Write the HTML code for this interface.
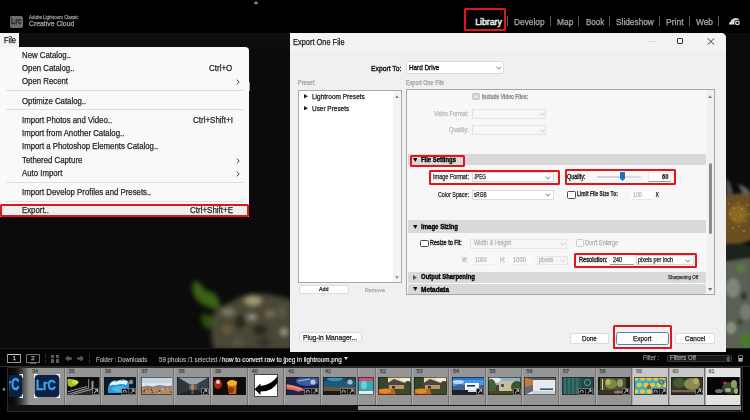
<!DOCTYPE html>
<html><head><meta charset="utf-8"><style>
html,body{margin:0;padding:0;width:750px;height:420px;overflow:hidden;background:#000;}
body>div,body>svg{position:absolute;}
.t{white-space:nowrap;line-height:1;font-family:"Liberation Sans",sans-serif;transform-origin:0 0;-webkit-text-stroke:0.25px currentColor;}
</style></head><body>
<div style="left:0.00px;top:0.00px;width:750.00px;height:33.00px;background:#000;"></div>
<div style="left:0.00px;top:33.00px;width:750.00px;height:319.00px;background:#0b0b0b;"></div>
<svg style="left:160px;top:255px;" width="130" height="95" viewBox="160 255 130 95"><defs><filter id="bl" x="-50%" y="-50%" width="200%" height="200%"><feGaussianBlur stdDeviation="2.4"/></filter><filter id="bl2" x="-50%" y="-50%" width="200%" height="200%"><feGaussianBlur stdDeviation="2.8"/></filter></defs>
<g filter="url(#bl)">
<path d="M194 281 Q199 280 203 288 Q208 292 214 293 Q221 300 220 308 Q214 311 206 306 Q198 302 194 296 Q191 288 194 281Z" fill="#3a6212"/>
<path d="M201 315 Q210 313 214 318 Q214 328 207 329 Q200 323 201 315Z" fill="#2c5010"/>
<path d="M214 312 Q222 306 240 297 Q252 293 266 294 Q282 297 292 300 L292 350 L214 350 Q208 330 214 312Z" fill="#484636"/>
</g>
<g filter="url(#bl2)">
<ellipse cx="253" cy="301" rx="9" ry="5" fill="#a29a72"/>
<ellipse cx="228" cy="312" rx="7" ry="4" fill="#807a62"/>
<ellipse cx="252" cy="317" rx="5" ry="3" fill="#a0a098"/>
<ellipse cx="270" cy="314" rx="5" ry="4" fill="#7a7056"/>
<ellipse cx="240" cy="322" rx="5" ry="6" fill="#22221a"/>
<ellipse cx="260" cy="330" rx="7" ry="5" fill="#26241c"/>
<ellipse cx="284" cy="332" rx="4" ry="4" fill="#9a9a90"/>
<ellipse cx="227" cy="330" rx="5" ry="5" fill="#6a5a40"/>
<ellipse cx="264" cy="342" rx="7" ry="5" fill="#34322a"/>
<ellipse cx="238" cy="342" rx="6" ry="4" fill="#585444"/>
<ellipse cx="282" cy="312" rx="5" ry="6" fill="#5a584a"/>
</g></svg>
<svg style="left:726px;top:150px;" width="24" height="202" viewBox="726 150 24 202"><defs><filter id="bm" x="-50%" y="-50%" width="200%" height="200%"><feGaussianBlur stdDeviation="1.6"/></filter><filter id="bm2" x="-50%" y="-50%" width="200%" height="200%"><feGaussianBlur stdDeviation="0.6"/></filter></defs>
<g filter="url(#bm)">
<path d="M726 178 Q731 182 733 194 L728 197 L726 197Z" fill="#505048"/>
<path d="M738 184 Q746 186 752 194 L744 197Z" fill="#60605a"/>
<path d="M724 198 Q736 190 752 196 L752 240 Q740 244 724 246Z" fill="#6a5020"/>
<ellipse cx="738" cy="214" rx="9" ry="9" fill="#8a6a24"/>
<path d="M724 244 Q738 242 752 246 L752 260 L724 262Z" fill="#1e221c"/>
<path d="M724 262 L752 258 L752 352 L724 352Z" fill="#5a6054"/>
<ellipse cx="741" cy="268" rx="5" ry="4" fill="#5a7a40"/>
<ellipse cx="733" cy="288" rx="7" ry="10" fill="#7e8478"/>
<ellipse cx="746" cy="312" rx="6" ry="8" fill="#767c70"/>
<ellipse cx="746" cy="340" rx="6" ry="7" fill="#4a7a2a"/><ellipse cx="731" cy="328" rx="5" ry="6" fill="#8a9080"/><ellipse cx="740" cy="322" rx="3" ry="3" fill="#3a4034"/>
<ellipse cx="744" cy="296" rx="3" ry="4" fill="#2e322a"/>
</g>
<g filter="url(#bm2)" fill="#b08a30">
<circle cx="729" cy="204" r="0.8"/><circle cx="733" cy="208" r="0.9"/><circle cx="738" cy="203" r="0.8"/><circle cx="742" cy="209" r="0.9"/><circle cx="747" cy="205" r="0.8"/>
<circle cx="730" cy="214" r="0.9"/><circle cx="735" cy="219" r="0.8"/><circle cx="741" cy="216" r="0.9"/><circle cx="746" cy="221" r="0.8"/><circle cx="728" cy="224" r="0.8"/>
<circle cx="733" cy="228" r="0.9"/><circle cx="739" cy="226" r="0.8"/><circle cx="744" cy="231" r="0.9"/><circle cx="749" cy="214" r="0.8"/>
</g></svg>
<div style="left:10.00px;top:15.50px;width:13.00px;height:12.00px;background:#6d6d6d;border-radius:2px;"></div>
<div class="t" style="left:11.20px;top:17.88px;font-size:8.14px;font-weight:bold;color:#262626;transform:scaleX(0.837);">Lrc</div>
<div class="t" style="left:29.00px;top:14.55px;font-size:5.23px;color:#9a9a9a;transform:scaleX(0.853);">Adobe Lightroom Classic</div>
<div class="t" style="left:29.00px;top:19.70px;font-size:7.41px;color:#a8a8a8;transform:scaleX(0.924);">Creative Cloud</div>
<div style="left:464.40px;top:8.00px;width:41.80px;height:23.00px;border:2px solid #e3151c;border-radius:1.5px;box-sizing:border-box;"></div>
<div class="t" style="left:475.20px;top:18.09px;font-size:8.72px;color:#f2f2f2;-webkit-text-stroke:0.45px #f2f2f2;">Library</div>
<div class="t" style="left:514.00px;top:18.09px;font-size:8.72px;color:#a9a9a9;transform:scaleX(0.956);">Develop</div>
<div class="t" style="left:556.60px;top:18.09px;font-size:8.72px;color:#a9a9a9;transform:scaleX(0.967);">Map</div>
<div class="t" style="left:585.70px;top:18.09px;font-size:8.72px;color:#a9a9a9;transform:scaleX(0.911);">Book</div>
<div class="t" style="left:615.80px;top:18.09px;font-size:8.72px;color:#a9a9a9;transform:scaleX(0.953);">Slideshow</div>
<div class="t" style="left:665.70px;top:18.09px;font-size:8.72px;color:#a9a9a9;transform:scaleX(0.976);">Print</div>
<div class="t" style="left:695.60px;top:18.09px;font-size:8.72px;color:#a9a9a9;transform:scaleX(0.957);">Web</div>
<div style="left:507.10px;top:15.90px;width:1.00px;height:10.00px;background:#5a5a5a;"></div>
<div style="left:549.50px;top:15.90px;width:1.00px;height:10.00px;background:#5a5a5a;"></div>
<div style="left:578.10px;top:15.90px;width:1.00px;height:10.00px;background:#5a5a5a;"></div>
<div style="left:608.50px;top:15.90px;width:1.00px;height:10.00px;background:#5a5a5a;"></div>
<div style="left:658.90px;top:15.90px;width:1.00px;height:10.00px;background:#5a5a5a;"></div>
<div style="left:689.00px;top:15.90px;width:1.00px;height:10.00px;background:#5a5a5a;"></div>
<div style="left:718.30px;top:15.90px;width:1.00px;height:10.00px;background:#5a5a5a;"></div>
<svg style="left:726px;top:15px;" width="16" height="13" viewBox="726 15 16 13"><path d="M729 24.6 Q728.6 22.4 730.6 21.6 Q731.6 18.6 735.4 18 Q738.6 17.8 739.6 20.2 L737.5 24.6 Z" fill="#d6d6d6"/><circle cx="737.4" cy="22.9" r="3.1" fill="#000"/><circle cx="737.4" cy="22.9" r="1.8" fill="none" stroke="#d6d6d6" stroke-width="1.3"/></svg>
<svg style="left:252.5px;top:0.8px;" width="6" height="3.6" viewBox="0 0 6 3.6"><path d="M0 3.6 L3 0 L6 3.6Z" fill="#8a8a8a"/></svg>
<div style="left:19.00px;top:33.00px;width:271.00px;height:13.50px;background:#0e0e0e;"></div>
<div style="left:0.00px;top:33.00px;width:19.00px;height:13.50px;background:#f2f2f2;"></div>
<div class="t" style="left:3.80px;top:36.01px;font-size:8.58px;color:#111;transform:scaleX(0.868);">File</div>
<div style="left:0.00px;top:46.50px;width:249.00px;height:170.50px;background:#f9f9f9;border-radius:0 4px 0 0;"></div>
<div style="left:0.50px;top:204.50px;width:248.00px;height:12.00px;background:#eeeeee;"></div>
<div class="t" style="left:22.40px;top:50.71px;font-size:8.58px;color:#262626;transform:scaleX(0.910);">New Catalog..</div>
<div class="t" style="left:22.40px;top:63.71px;font-size:8.58px;color:#262626;transform:scaleX(0.910);">Open Catalog..</div>
<div class="t" style="left:209.34px;top:63.71px;font-size:8.58px;color:#262626;transform:scaleX(0.930);">Ctrl+O</div>
<div class="t" style="left:22.40px;top:77.01px;font-size:8.58px;color:#262626;transform:scaleX(0.910);">Open Recent</div>
<svg style="left:235.5px;top:78.80px;" width="4" height="6" viewBox="0 0 4 6"><path d="M0.7 0.6 L3.2 3 L0.7 5.4" fill="none" stroke="#333" stroke-width="0.9"/></svg>
<div class="t" style="left:22.40px;top:96.71px;font-size:8.58px;color:#262626;transform:scaleX(0.910);">Optimize Catalog..</div>
<div class="t" style="left:22.40px;top:115.71px;font-size:8.58px;color:#262626;transform:scaleX(0.910);">Import Photos and Video..</div>
<div class="t" style="left:192.71px;top:115.71px;font-size:8.58px;color:#262626;transform:scaleX(0.930);">Ctrl+Shift+I</div>
<div class="t" style="left:22.40px;top:129.01px;font-size:8.58px;color:#262626;transform:scaleX(0.910);">Import from Another Catalog..</div>
<div class="t" style="left:22.40px;top:142.41px;font-size:8.58px;color:#262626;transform:scaleX(0.910);">Import a Photoshop Elements Catalog..</div>
<div class="t" style="left:22.40px;top:155.71px;font-size:8.58px;color:#262626;transform:scaleX(0.910);">Tethered Capture</div>
<svg style="left:235.5px;top:157.50px;" width="4" height="6" viewBox="0 0 4 6"><path d="M0.7 0.6 L3.2 3 L0.7 5.4" fill="none" stroke="#333" stroke-width="0.9"/></svg>
<div class="t" style="left:22.40px;top:169.01px;font-size:8.58px;color:#262626;transform:scaleX(0.910);">Auto Import</div>
<svg style="left:235.5px;top:170.80px;" width="4" height="6" viewBox="0 0 4 6"><path d="M0.7 0.6 L3.2 3 L0.7 5.4" fill="none" stroke="#333" stroke-width="0.9"/></svg>
<div class="t" style="left:22.40px;top:188.01px;font-size:8.58px;color:#262626;transform:scaleX(0.910);">Import Develop Profiles and Presets..</div>
<div class="t" style="left:22.40px;top:206.41px;font-size:8.58px;color:#262626;transform:scaleX(0.910);">Export..</div>
<div class="t" style="left:189.60px;top:206.41px;font-size:8.58px;color:#262626;transform:scaleX(0.930);">Ctrl+Shift+E</div>
<div style="left:6.00px;top:90.00px;width:238.00px;height:1.00px;background:#dedede;"></div>
<div style="left:6.00px;top:108.70px;width:238.00px;height:1.00px;background:#dedede;"></div>
<div style="left:6.00px;top:181.50px;width:238.00px;height:1.00px;background:#dedede;"></div>
<div style="left:6.00px;top:200.80px;width:238.00px;height:1.00px;background:#dedede;"></div>
<div style="left:0.00px;top:204.00px;width:249.00px;height:13.20px;border:2px solid #e3151c;border-radius:1.5px;box-sizing:border-box;"></div>
<div style="left:249.00px;top:81.80px;width:1.30px;height:8.90px;background:#9a9a9a;"></div>
<div style="left:290.00px;top:33.00px;width:436.00px;height:319.00px;background:#f0f0f0;border-radius:0 5px 0 0;"></div>
<div style="left:290.00px;top:33.00px;width:436.00px;height:17.70px;background:#f3f3f3;border-radius:0 5px 0 0;"></div>
<div class="t" style="left:293.00px;top:37.66px;font-size:8.87px;color:#1a1a1a;transform:scaleX(0.838);">Export One File</div>
<div style="left:647.50px;top:41.00px;width:7.00px;height:0.60px;background:#d4d4d4;"></div>
<div style="left:676.80px;top:38.40px;width:6.00px;height:6.00px;border:1px solid #333;border-radius:1px;box-sizing:border-box;"></div>
<svg style="left:706.5px;top:38px;" width="8" height="7" viewBox="0 0 8 7"><path d="M0.6 0.4 L7.2 6.6 M7.2 0.4 L0.6 6.6" stroke="#333" stroke-width="0.9"/></svg>
<div class="t" style="left:370.90px;top:64.62px;font-size:7.27px;color:#1a1a1a;transform:scaleX(0.933);-webkit-text-stroke:0.4px #1a1a1a;">Export To:</div>
<div style="left:406.00px;top:61.40px;width:98.00px;height:12.80px;background:#fff;border:1px solid #dcdcdc;border-radius:2px;box-sizing:border-box;"></div>
<div class="t" style="left:408.70px;top:64.75px;font-size:7.12px;color:#1a1a1a;transform:scaleX(0.893);-webkit-text-stroke:0.4px #1a1a1a;">Hard Drive</div>
<svg style="left:496.00px;top:66.00px;" width="5.5" height="4" viewBox="0 0 5.5 4"><path d="M0.5 0.7 L2.75 3.1 L5.00 0.7" fill="none" stroke="#555" stroke-width="0.8"/></svg>
<div class="t" style="left:298.00px;top:80.04px;font-size:6.54px;color:#a0a0a0;transform:scaleX(0.845);">Preset:</div>
<div class="t" style="left:406.00px;top:80.04px;font-size:6.54px;color:#a0a0a0;transform:scaleX(0.836);">Export One File</div>
<div style="left:298.00px;top:89.60px;width:103.50px;height:193.60px;background:#fff;border:1px solid #a8a8a8;box-sizing:border-box;"></div>
<div style="left:393.00px;top:90.60px;width:7.50px;height:191.60px;background:#f3f3f3;"></div>
<svg style="left:394.5px;top:94.5px;" width="4" height="3.5" viewBox="0 0 4 3.5"><path d="M0 3.5 L2 0.3 L4 3.5Z" fill="#777"/></svg>
<svg style="left:394.5px;top:275.5px;" width="4" height="3.5" viewBox="0 0 4 3.5"><path d="M0 0 L2 3.2 L4 0Z" fill="#999"/></svg>
<svg style="left:304.2px;top:94.30px;" width="4" height="4.6" viewBox="0 0 4 4.6"><path d="M0 0 L4 2.3 L0 4.6Z" fill="#222"/></svg>
<div class="t" style="left:312.00px;top:93.27px;font-size:6.98px;color:#1a1a1a;transform:scaleX(0.934);">Lightroom Presets</div>
<svg style="left:304.2px;top:105.80px;" width="4" height="4.6" viewBox="0 0 4 4.6"><path d="M0 0 L4 2.3 L0 4.6Z" fill="#222"/></svg>
<div class="t" style="left:312.00px;top:104.77px;font-size:6.98px;color:#1a1a1a;transform:scaleX(0.923);">User Presets</div>
<div style="left:298.80px;top:285.30px;width:50.10px;height:9.10px;background:#fdfdfd;border:1px solid #dddddd;border-radius:2px;box-sizing:border-box;"></div>
<div class="t" style="left:318.80px;top:286.49px;font-size:6.25px;color:#111;transform:scaleX(0.863);">Add</div>
<div class="t" style="left:365.00px;top:286.61px;font-size:6.10px;color:#a8a8a8;transform:scaleX(0.880);">Remove</div>
<div style="left:406.00px;top:89.20px;width:309.30px;height:206.30px;background:#f7f7f7;border:1px solid #a8a8a8;box-sizing:border-box;"></div>
<div style="left:707.00px;top:90.20px;width:7.30px;height:204.30px;background:#f0f0f0;"></div>
<div style="left:708.50px;top:163.00px;width:3.10px;height:70.50px;background:#8c8c8c;border-radius:1.5px;"></div>
<svg style="left:708.2px;top:94.5px;" width="4.2" height="3.5" viewBox="0 0 4.2 3.5"><path d="M0 3.5 L2.1 0.3 L4.2 3.5Z" fill="#777"/></svg>
<svg style="left:708.2px;top:287.8px;" width="4.2" height="3.5" viewBox="0 0 4.2 3.5"><path d="M0 0 L2.1 3.2 L4.2 0Z" fill="#777"/></svg>
<div style="left:472.00px;top:92.50px;width:8.00px;height:7.90px;background:#d2d2d2;border:1px solid #c4c4c4;border-radius:1.5px;box-sizing:border-box;"></div>
<svg style="left:473.30px;top:94.30px;" width="6" height="5" viewBox="0 0 6 5"><path d="M0.6 2.4 L2.3 4 L5.4 0.8" fill="none" stroke="#fff" stroke-width="0.9"/></svg>
<div class="t" style="left:481.70px;top:93.74px;font-size:6.54px;font-weight:bold;color:#8a8a8a;transform:scaleX(0.755);">Include Video Files:</div>
<div class="t" style="left:434.00px;top:110.56px;font-size:6.40px;color:#b9b9b9;transform:scaleX(0.867);">Video Format:</div>
<div style="left:471.50px;top:109.00px;width:74.50px;height:9.70px;background:#f6f6f6;border:1px solid #e4e4e4;box-sizing:border-box;"></div>
<svg style="left:539.50px;top:112.30px;" width="5.5" height="4" viewBox="0 0 5.5 4"><path d="M0.5 0.7 L2.75 3.1 L5.00 0.7" fill="none" stroke="#c4c4c4" stroke-width="0.8"/></svg>
<div class="t" style="left:449.00px;top:126.56px;font-size:6.40px;color:#b9b9b9;transform:scaleX(0.909);">Quality:</div>
<div style="left:471.50px;top:125.00px;width:74.50px;height:10.00px;background:#f6f6f6;border:1px solid #e4e4e4;box-sizing:border-box;"></div>
<svg style="left:539.50px;top:128.50px;" width="5.5" height="4" viewBox="0 0 5.5 4"><path d="M0.5 0.7 L2.75 3.1 L5.00 0.7" fill="none" stroke="#c4c4c4" stroke-width="0.8"/></svg>
<div style="left:408.00px;top:154.20px;width:297.60px;height:11.30px;background:#d9d9d9;"></div>
<svg style="left:412.8px;top:157.75px;" width="4.6" height="4" viewBox="0 0 4.6 4"><path d="M0 0 L4.6 0 L2.3 4Z" fill="#111"/></svg>
<div class="t" style="left:421.00px;top:157.09px;font-size:6.54px;font-weight:bold;color:#000;transform:scaleX(0.900);-webkit-text-stroke:0.35px #000;">File Settings</div>
<div style="left:409.50px;top:155.30px;width:55.50px;height:11.30px;border:2px solid #e3151c;border-radius:1.5px;box-sizing:border-box;"></div>
<div class="t" style="left:432.90px;top:173.82px;font-size:6.69px;color:#262626;transform:scaleX(0.826);">Image Format:</div>
<div style="left:472.00px;top:172.00px;width:81.60px;height:10.20px;background:#fff;border:1px solid #dadada;box-sizing:border-box;"></div>
<div class="t" style="left:474.00px;top:173.82px;font-size:6.69px;color:#222;transform:scaleX(0.681);">JPEG</div>
<svg style="left:545.00px;top:175.60px;" width="5.5" height="4" viewBox="0 0 5.5 4"><path d="M0.5 0.7 L2.75 3.1 L5.00 0.7" fill="none" stroke="#555" stroke-width="0.8"/></svg>
<div style="left:429.40px;top:169.90px;width:130.20px;height:15.30px;border:2px solid #e3151c;border-radius:1.5px;box-sizing:border-box;"></div>
<div class="t" style="left:437.80px;top:191.72px;font-size:6.69px;color:#262626;transform:scaleX(0.802);">Color Space:</div>
<div style="left:472.00px;top:189.50px;width:81.60px;height:10.20px;background:#fff;border:1px solid #dadada;box-sizing:border-box;"></div>
<div class="t" style="left:474.00px;top:191.72px;font-size:6.69px;color:#222;transform:scaleX(0.701);">sRGB</div>
<svg style="left:545.00px;top:193.20px;" width="5.5" height="4" viewBox="0 0 5.5 4"><path d="M0.5 0.7 L2.75 3.1 L5.00 0.7" fill="none" stroke="#555" stroke-width="0.8"/></svg>
<div class="t" style="left:567.20px;top:173.64px;font-size:6.54px;color:#1a1a1a;transform:scaleX(0.830);-webkit-text-stroke:0.35px #1a1a1a;">Quality:</div>
<div style="left:596.50px;top:175.70px;width:44.40px;height:2.20px;background:#dedede;border-radius:1px;"></div>
<div style="left:596.50px;top:175.70px;width:25.50px;height:2.20px;background:#d4d4d4;border-radius:1px;"></div>
<svg style="left:620.2px;top:172px;" width="5" height="9" viewBox="0 0 5 9"><path d="M0 0.5 Q0 0 0.5 0 L4.5 0 Q5 0 5 0.5 L5 6.5 L2.5 9 L0 6.5Z" fill="#1f6fc0"/></svg>
<div style="left:647.70px;top:172.20px;width:23.50px;height:9.60px;background:#fff;border:1px solid #e8e8e8;border-bottom:1px solid #9a9a9a;box-sizing:border-box;"></div>
<div class="t" style="left:662.40px;top:173.74px;font-size:6.54px;font-weight:bold;color:#222;transform:scaleX(0.880);">60</div>
<div style="left:564.50px;top:168.50px;width:111.70px;height:16.80px;border:2px solid #e3151c;border-radius:1.5px;box-sizing:border-box;"></div>
<div style="left:567.00px;top:190.90px;width:8.50px;height:7.90px;background:#fff;border:1px solid #4a4a4a;border-radius:1.5px;box-sizing:border-box;"></div>
<div class="t" style="left:576.80px;top:191.46px;font-size:6.40px;font-weight:bold;color:#262626;transform:scaleX(0.757);">Limit File Size To:</div>
<div style="left:630.80px;top:191.00px;width:22.70px;height:8.50px;background:#fff;border-bottom:1px solid #e6e6e6;box-sizing:border-box;"></div>
<div class="t" style="left:632.80px;top:191.76px;font-size:6.40px;color:#b5b5b5;transform:scaleX(0.825);">100</div>
<div class="t" style="left:656.00px;top:191.76px;font-size:6.40px;font-weight:bold;color:#333;transform:scaleX(0.606);">K</div>
<div style="left:408.00px;top:220.30px;width:297.60px;height:12.70px;background:#d9d9d9;"></div>
<svg style="left:412.8px;top:224.55px;" width="4.6" height="4" viewBox="0 0 4.6 4"><path d="M0 0 L4.6 0 L2.3 4Z" fill="#111"/></svg>
<div class="t" style="left:421.00px;top:223.89px;font-size:6.54px;font-weight:bold;color:#000;transform:scaleX(0.926);-webkit-text-stroke:0.35px #000;">Image Sizing</div>
<div style="left:420.30px;top:239.50px;width:8.50px;height:7.90px;background:#fff;border:1px solid #4a4a4a;border-radius:1.5px;box-sizing:border-box;"></div>
<div class="t" style="left:430.00px;top:239.84px;font-size:6.54px;color:#1a1a1a;transform:scaleX(0.833);-webkit-text-stroke:0.4px #1a1a1a;">Resize to Fit:</div>
<div style="left:470.40px;top:238.50px;width:97.10px;height:10.20px;background:#f6f6f6;border:1px solid #e6e6e6;box-sizing:border-box;"></div>
<div class="t" style="left:473.60px;top:240.36px;font-size:6.40px;color:#b5b5b5;transform:scaleX(0.867);">Width &amp; Height</div>
<svg style="left:560.20px;top:242.20px;" width="5.5" height="4" viewBox="0 0 5.5 4"><path d="M0.5 0.7 L2.75 3.1 L5.00 0.7" fill="none" stroke="#c4c4c4" stroke-width="0.8"/></svg>
<div style="left:576.30px;top:239.40px;width:7.50px;height:8.00px;background:#f6f6f6;border:1px solid #cccccc;border-radius:1.5px;box-sizing:border-box;"></div>
<div class="t" style="left:585.00px;top:240.16px;font-size:6.40px;color:#b0b0b0;transform:scaleX(0.856);">Don't Enlarge</div>
<div class="t" style="left:461.80px;top:256.96px;font-size:6.40px;color:#b5b5b5;transform:scaleX(0.715);">W:</div>
<div style="left:472.00px;top:255.50px;width:23.00px;height:9.00px;background:#fafafa;border-bottom:1px solid #eeeeee;box-sizing:border-box;"></div>
<div class="t" style="left:474.70px;top:256.86px;font-size:6.40px;color:#b5b5b5;transform:scaleX(0.822);">1000</div>
<div class="t" style="left:499.80px;top:256.96px;font-size:6.40px;color:#b5b5b5;transform:scaleX(0.813);">H:</div>
<div style="left:509.90px;top:255.50px;width:20.70px;height:9.00px;background:#fafafa;border-bottom:1px solid #eeeeee;box-sizing:border-box;"></div>
<div class="t" style="left:513.00px;top:256.86px;font-size:6.40px;color:#b5b5b5;transform:scaleX(0.907);">1000</div>
<div style="left:536.50px;top:255.50px;width:31.00px;height:9.00px;background:#f6f6f6;border:1px solid #e6e6e6;box-sizing:border-box;"></div>
<div class="t" style="left:538.70px;top:256.86px;font-size:6.40px;color:#b5b5b5;transform:scaleX(0.875);">pixels</div>
<svg style="left:560.20px;top:258.80px;" width="5.5" height="4" viewBox="0 0 5.5 4"><path d="M0.5 0.7 L2.75 3.1 L5.00 0.7" fill="none" stroke="#c4c4c4" stroke-width="0.8"/></svg>
<div class="t" style="left:578.80px;top:256.84px;font-size:6.54px;color:#1a1a1a;transform:scaleX(0.868);-webkit-text-stroke:0.35px #1a1a1a;">Resolution:</div>
<div style="left:609.90px;top:255.00px;width:24.00px;height:9.70px;background:#fff;border-bottom:1px solid #9a9a9a;box-sizing:border-box;"></div>
<div class="t" style="left:612.80px;top:256.86px;font-size:6.40px;color:#222;transform:scaleX(0.853);">240</div>
<div style="left:636.20px;top:255.00px;width:58.30px;height:9.70px;background:#fff;border:1px solid #dadada;box-sizing:border-box;"></div>
<div class="t" style="left:638.40px;top:256.76px;font-size:6.40px;color:#222;transform:scaleX(0.856);">pixels per inch</div>
<svg style="left:685.40px;top:258.60px;" width="5.5" height="4" viewBox="0 0 5.5 4"><path d="M0.5 0.7 L2.75 3.1 L5.00 0.7" fill="none" stroke="#555" stroke-width="0.8"/></svg>
<div style="left:574.30px;top:252.70px;width:122.40px;height:14.90px;border:2px solid #e3151c;border-radius:1.5px;box-sizing:border-box;"></div>
<div style="left:408.00px;top:271.50px;width:297.60px;height:11.50px;background:#d9d9d9;"></div>
<svg style="left:412.8px;top:274.85px;" width="4.2" height="5" viewBox="0 0 4.2 5"><path d="M0 0 L4.2 2.5 L0 5Z" fill="#555"/></svg>
<div class="t" style="left:421.00px;top:274.49px;font-size:6.54px;font-weight:bold;color:#000;transform:scaleX(0.912);-webkit-text-stroke:0.35px #000;">Output Sharpening</div>
<div class="t" style="left:668.00px;top:275.21px;font-size:5.52px;color:#333;transform:scaleX(0.818);">Sharpening Off</div>
<div style="left:408.00px;top:284.40px;width:297.60px;height:9.90px;background:#d9d9d9;"></div>
<svg style="left:412.8px;top:287.25px;" width="4.6" height="4" viewBox="0 0 4.6 4"><path d="M0 0 L4.6 0 L2.3 4Z" fill="#111"/></svg>
<div class="t" style="left:421.00px;top:286.59px;font-size:6.54px;font-weight:bold;color:#000;transform:scaleX(0.988);-webkit-text-stroke:0.35px #000;">Metadata</div>
<div style="left:298.70px;top:332.00px;width:63.30px;height:10.30px;background:#fdfdfd;border:1px solid #dcdcdc;border-radius:2px;box-sizing:border-box;"></div>
<div class="t" style="left:303.30px;top:334.00px;font-size:7.41px;color:#1a1a1a;transform:scaleX(0.898);">Plug-in Manager...</div>
<div style="left:569.50px;top:332.70px;width:39.90px;height:11.80px;background:#fdfdfd;border:1px solid #dcdcdc;border-radius:2px;box-sizing:border-box;"></div>
<div class="t" style="left:581.50px;top:335.07px;font-size:6.98px;color:#1a1a1a;transform:scaleX(0.887);">Done</div>
<div style="left:615.60px;top:332.00px;width:53.20px;height:13.00px;background:#fdfdfd;border:1px solid #4a86b8;border-radius:2.5px;box-sizing:border-box;"></div>
<div class="t" style="left:632.60px;top:335.07px;font-size:6.98px;color:#1a1a1a;transform:scaleX(0.922);">Export</div>
<div style="left:675.20px;top:332.70px;width:39.40px;height:11.80px;background:#fdfdfd;border:1px solid #dcdcdc;border-radius:2px;box-sizing:border-box;"></div>
<div class="t" style="left:684.70px;top:335.07px;font-size:6.98px;color:#1a1a1a;transform:scaleX(0.935);">Cancel</div>
<div style="left:613.30px;top:325.20px;width:58.90px;height:23.60px;border:2px solid #e3151c;border-radius:1.5px;box-sizing:border-box;"></div>
<div style="left:0.00px;top:348.40px;width:290.00px;height:3.60px;background:#050505;"></div>
<div style="left:726.00px;top:348.40px;width:24.00px;height:3.60px;background:#050505;"></div>
<div style="left:0.00px;top:348.40px;width:290.00px;height:1.00px;background:#1c1c1c;"></div>
<div style="left:726.00px;top:348.40px;width:24.00px;height:1.00px;background:#1c1c1c;"></div>
<div style="left:0.00px;top:352.00px;width:750.00px;height:15.00px;background:#040404;"></div>
<div style="left:0.00px;top:366.30px;width:750.00px;height:1.00px;background:#2a2a2a;"></div>
<div style="left:7.00px;top:354.10px;width:14.20px;height:8.70px;border:1px solid #9a9a9a;border-top:1.6px solid #c8c8c8;box-sizing:border-box;"></div>
<div class="t" style="left:12.60px;top:355.86px;font-size:5.81px;color:#dddddd;transform:scaleX(0.804);">1</div>
<div style="left:25.90px;top:354.30px;width:14.10px;height:8.40px;border:1px solid #727272;box-sizing:border-box;"></div>
<div style="left:30.00px;top:363.00px;width:6.00px;height:0.60px;background:#5a5a5a;"></div>
<div class="t" style="left:31.00px;top:355.86px;font-size:5.81px;color:#a0a0a0;transform:scaleX(1.175);">2</div>
<div style="left:44.8px;top:354px;width:1px;height:9px;background:repeating-linear-gradient(180deg,#444 0 1px,transparent 1px 2px);"></div>
<div style="left:88.8px;top:354px;width:1px;height:9px;background:repeating-linear-gradient(180deg,#444 0 1px,transparent 1px 2px);"></div>
<div style="left:51.30px;top:354.70px;width:3.20px;height:3.40px;background:#5a5a5a;"></div>
<div style="left:55.50px;top:354.70px;width:3.20px;height:3.40px;background:#5a5a5a;"></div>
<div style="left:51.30px;top:359.20px;width:3.20px;height:3.40px;background:#5a5a5a;"></div>
<div style="left:55.50px;top:359.20px;width:3.20px;height:3.40px;background:#5a5a5a;"></div>
<svg style="left:64.5px;top:355px;" width="7" height="7" viewBox="0 0 7 7"><path d="M3.5 0.2 L0.2 3.5 L3.5 6.8 L3.5 4.7 L6.8 4.7 L6.8 2.3 L3.5 2.3Z" fill="#5a5a5a"/></svg>
<svg style="left:77px;top:355px;" width="7" height="7" viewBox="0 0 7 7"><path d="M3.5 0.2 L6.8 3.5 L3.5 6.8 L3.5 4.7 L0.2 4.7 L0.2 2.3 L3.5 2.3Z" fill="#5a5a5a"/></svg>
<div class="t" style="left:95.60px;top:356.37px;font-size:6.98px;color:#b4b4b4;transform:scaleX(0.855);-webkit-text-stroke:0.15px #b4b4b4;">Folder : Downloads</div>
<div class="t" style="left:159.00px;top:356.37px;font-size:6.98px;color:#b4b4b4;transform:scaleX(0.883);-webkit-text-stroke:0.15px #b4b4b4;">59 photos /1 selected /</div>
<div class="t" style="left:221.50px;top:356.37px;font-size:6.98px;color:#eeeeee;transform:scaleX(0.901);-webkit-text-stroke:0.15px #eee;">how to convert raw to jpeg in lightroom.png</div>
<svg style="left:344px;top:356.5px;" width="4" height="3" viewBox="0 0 4 3"><path d="M0 0 L4 0 L2 3Z" fill="#ddd"/></svg>
<div class="t" style="left:642.90px;top:355.44px;font-size:6.54px;color:#8a8a8a;transform:scaleX(0.886);">Filter :</div>
<div style="left:667.10px;top:354.60px;width:65.20px;height:7.60px;background:#161616;border:1px solid #363636;border-radius:1px;box-sizing:border-box;"></div>
<div class="t" style="left:670.00px;top:355.44px;font-size:6.54px;color:#9a9a9a;transform:scaleX(0.921);">Filters Off</div>
<svg style="left:726.3px;top:355.5px;" width="4.5" height="6" viewBox="0 0 4.5 6"><path d="M0.3 2.4 L2.25 0.4 L4.2 2.4Z M0.3 3.6 L2.25 5.6 L4.2 3.6Z" fill="#888"/></svg>
<div style="left:737.80px;top:354.60px;width:5.60px;height:7.60px;border:1px solid #7a7a7a;border-radius:1px;box-sizing:border-box;"></div>
<div style="left:739.00px;top:358.00px;width:3.20px;height:3.00px;background:#aaa;"></div>
<div style="left:7.30px;top:367.00px;width:735.70px;height:44.50px;background:#0a0a0a;border:1px solid #2b2b2b;box-sizing:border-box;"></div>
<div style="left:7.80px;top:368.00px;width:20.20px;height:36.60px;background:#959595;border-right:1px solid #727272;border-left:0.8px solid #aaa;box-sizing:border-box;"></div>
<div style="left:28.00px;top:368.00px;width:36.50px;height:36.60px;background:#959595;border-right:1px solid #727272;border-left:0.8px solid #aaa;box-sizing:border-box;"></div>
<div class="t" style="left:32.00px;top:369.13px;font-size:5.38px;color:#454545;">34</div>
<div style="left:64.50px;top:368.00px;width:36.40px;height:36.60px;background:#959595;border-right:1px solid #727272;border-left:0.8px solid #aaa;box-sizing:border-box;"></div>
<div class="t" style="left:68.50px;top:369.13px;font-size:5.38px;color:#454545;">35</div>
<div style="left:100.90px;top:368.00px;width:36.70px;height:36.60px;background:#959595;border-right:1px solid #727272;border-left:0.8px solid #aaa;box-sizing:border-box;"></div>
<div class="t" style="left:104.90px;top:369.13px;font-size:5.38px;color:#454545;">36</div>
<div style="left:137.60px;top:368.00px;width:36.80px;height:36.60px;background:#959595;border-right:1px solid #727272;border-left:0.8px solid #aaa;box-sizing:border-box;"></div>
<div class="t" style="left:141.60px;top:369.13px;font-size:5.38px;color:#454545;">37</div>
<div style="left:174.40px;top:368.00px;width:36.60px;height:36.60px;background:#959595;border-right:1px solid #727272;border-left:0.8px solid #aaa;box-sizing:border-box;"></div>
<div class="t" style="left:178.40px;top:369.13px;font-size:5.38px;color:#454545;">38</div>
<div style="left:211.00px;top:368.00px;width:36.80px;height:36.60px;background:#959595;border-right:1px solid #727272;border-left:0.8px solid #aaa;box-sizing:border-box;"></div>
<div class="t" style="left:215.00px;top:369.13px;font-size:5.38px;color:#454545;">39</div>
<div style="left:247.80px;top:368.00px;width:36.40px;height:36.60px;background:#959595;border-right:1px solid #727272;border-left:0.8px solid #aaa;box-sizing:border-box;"></div>
<div class="t" style="left:251.80px;top:369.13px;font-size:5.38px;color:#454545;">40</div>
<div style="left:284.20px;top:368.00px;width:36.80px;height:36.60px;background:#959595;border-right:1px solid #727272;border-left:0.8px solid #aaa;box-sizing:border-box;"></div>
<div class="t" style="left:288.20px;top:369.13px;font-size:5.38px;color:#454545;">41</div>
<div style="left:321.00px;top:368.00px;width:36.60px;height:36.60px;background:#959595;border-right:1px solid #727272;border-left:0.8px solid #aaa;box-sizing:border-box;"></div>
<div class="t" style="left:325.00px;top:369.13px;font-size:5.38px;color:#454545;">42</div>
<div style="left:357.60px;top:368.00px;width:18.40px;height:36.60px;background:#959595;border-right:1px solid #727272;border-left:0.8px solid #aaa;box-sizing:border-box;"></div>
<div style="left:376.00px;top:368.00px;width:36.40px;height:36.60px;background:#959595;border-right:1px solid #727272;border-left:0.8px solid #aaa;box-sizing:border-box;"></div>
<div class="t" style="left:380.00px;top:369.13px;font-size:5.38px;color:#454545;">52</div>
<div style="left:412.40px;top:368.00px;width:36.60px;height:36.60px;background:#959595;border-right:1px solid #727272;border-left:0.8px solid #aaa;box-sizing:border-box;"></div>
<div class="t" style="left:416.40px;top:369.13px;font-size:5.38px;color:#454545;">53</div>
<div style="left:449.00px;top:368.00px;width:36.60px;height:36.60px;background:#959595;border-right:1px solid #727272;border-left:0.8px solid #aaa;box-sizing:border-box;"></div>
<div class="t" style="left:453.00px;top:369.13px;font-size:5.38px;color:#454545;">54</div>
<div style="left:485.60px;top:368.00px;width:36.80px;height:36.60px;background:#959595;border-right:1px solid #727272;border-left:0.8px solid #aaa;box-sizing:border-box;"></div>
<div class="t" style="left:489.60px;top:369.13px;font-size:5.38px;color:#454545;">55</div>
<div style="left:522.40px;top:368.00px;width:36.60px;height:36.60px;background:#959595;border-right:1px solid #727272;border-left:0.8px solid #aaa;box-sizing:border-box;"></div>
<div class="t" style="left:526.40px;top:369.13px;font-size:5.38px;color:#454545;">56</div>
<div style="left:559.00px;top:368.00px;width:36.60px;height:36.60px;background:#959595;border-right:1px solid #727272;border-left:0.8px solid #aaa;box-sizing:border-box;"></div>
<div class="t" style="left:563.00px;top:369.13px;font-size:5.38px;color:#454545;">57</div>
<div style="left:595.60px;top:368.00px;width:36.40px;height:36.60px;background:#959595;border-right:1px solid #727272;border-left:0.8px solid #aaa;box-sizing:border-box;"></div>
<div class="t" style="left:599.60px;top:369.13px;font-size:5.38px;color:#454545;">58</div>
<div style="left:632.00px;top:368.00px;width:36.50px;height:36.60px;background:#c8c8c8;border-right:1px solid #727272;border-left:0.8px solid #aaa;box-sizing:border-box;"></div>
<div class="t" style="left:636.00px;top:369.13px;font-size:5.38px;color:#666;">59</div>
<div style="left:668.50px;top:368.00px;width:36.10px;height:36.60px;background:#c8c8c8;border-right:1px solid #727272;border-left:0.8px solid #aaa;box-sizing:border-box;"></div>
<div class="t" style="left:672.50px;top:369.13px;font-size:5.38px;color:#666;">60</div>
<div style="left:704.60px;top:368.00px;width:36.70px;height:36.60px;background:#e2e2e2;border-right:1px solid #727272;border-left:0.8px solid #aaa;box-sizing:border-box;"></div>
<div class="t" style="left:708.60px;top:369.13px;font-size:5.38px;color:#666;">61</div>
<div style="left:7.80px;top:367.60px;width:22.20px;height:37.00px;background:linear-gradient(90deg,#0a0a0a 0%,#3a3a3a 40%,#959595 100%);"></div>
<div style="left:7.8px;top:367.6px;width:20px;height:37px;background:linear-gradient(90deg,rgba(8,8,8,1) 0%,rgba(8,8,8,0.85) 30%,rgba(8,8,8,0.3) 70%,rgba(8,8,8,0) 100%);"></div>
<div style="left:8.8px;top:374.5px;width:13.4px;height:22.5px;background:#0b2244;border-radius:0 2px 2px 0;overflow:hidden;"><div class="t" style="position:absolute;left:-8.4px;top:2.6px;font-size:15.6px;font-weight:bold;color:#3ea2f2;transform:scaleX(0.72);-webkit-text-stroke:0.5px #3ea2f2;">LrC</div></div>
<svg style="left:21.20px;top:373.50px;transform-origin:1px 1px;transform:rotate(90deg);" width="4" height="4" viewBox="0 0 4 4"><path d="M0.6 3.4 L0.6 0.6 L3.4 0.6" fill="none" stroke="#fff" stroke-width="1.1"/></svg>
<svg style="left:21.20px;top:396.00px;transform-origin:1px 1px;transform:rotate(180deg);" width="4" height="4" viewBox="0 0 4 4"><path d="M0.6 3.4 L0.6 0.6 L3.4 0.6" fill="none" stroke="#fff" stroke-width="1.1"/></svg>
<div style="left:34.5px;top:374.5px;width:24.5px;height:22.6px;background:#0b2244;border-radius:2px;"></div>
<div class="t" style="left:36.40px;top:377.18px;font-size:15.55px;font-weight:bold;color:#3ea2f2;transform:scaleX(0.736);-webkit-text-stroke:0.5px #3ea2f2;">LrC</div>
<svg style="left:33.50px;top:373.50px;transform-origin:1px 1px;transform:rotate(0deg);" width="4" height="4" viewBox="0 0 4 4"><path d="M0.6 3.4 L0.6 0.6 L3.4 0.6" fill="none" stroke="#fff" stroke-width="1.1"/></svg>
<svg style="left:58.00px;top:373.50px;transform-origin:1px 1px;transform:rotate(90deg);" width="4" height="4" viewBox="0 0 4 4"><path d="M0.6 3.4 L0.6 0.6 L3.4 0.6" fill="none" stroke="#fff" stroke-width="1.1"/></svg>
<svg style="left:58.00px;top:396.10px;transform-origin:1px 1px;transform:rotate(180deg);" width="4" height="4" viewBox="0 0 4 4"><path d="M0.6 3.4 L0.6 0.6 L3.4 0.6" fill="none" stroke="#fff" stroke-width="1.1"/></svg>
<svg style="left:33.50px;top:396.10px;transform-origin:1px 1px;transform:rotate(270deg);" width="4" height="4" viewBox="0 0 4 4"><path d="M0.6 3.4 L0.6 0.6 L3.4 0.6" fill="none" stroke="#fff" stroke-width="1.1"/></svg>
<svg style="left:0;top:0;" width="0" height="0"><defs><filter id="tb" x="-20%" y="-20%" width="140%" height="140%"><feGaussianBlur stdDeviation="0.7"/></filter><filter id="tb2" x="-20%" y="-20%" width="140%" height="140%"><feGaussianBlur stdDeviation="0.35"/></filter></defs></svg>
<svg style="left:67.20px;top:377.00px;" width="32.40" height="18.30" viewBox="0 0 32.40 18.30"><defs><filter id="f672" x="-20%" y="-20%" width="140%" height="140%"><feGaussianBlur stdDeviation="0.7"/></filter><filter id="f672b" x="-20%" y="-20%" width="140%" height="140%"><feGaussianBlur stdDeviation="0.35"/></filter><clipPath id="f672c"><rect width="32.40" height="18.30"/></clipPath></defs><g clip-path="url(#f672c)"><rect width="32.40" height="18.30" fill="#0c0c0c"/><g filter="url(#f672)"><path d="M0 2 Q6 1 12 5 Q10 9 4 10 Q0 9 0 6Z" fill="#a4c030"/><ellipse cx="8" cy="5" rx="3" ry="2" fill="#d0e050"/><path d="M0 17 L20 10 L32 12 L32 18 L0 18Z" fill="#2a2a2a"/><path d="M0 15 L20 9.5 M0 17.5 L22 11 M4 18 L26 12" stroke="#b8b8b8" stroke-width="0.8"/><rect x="21" y="2" width="1.2" height="9" fill="#777"/><rect x="24.5" y="4" width="2" height="8" fill="#999"/></g></g><rect x="0.3" y="0.3" width="31.80" height="17.70" fill="none" stroke="#1a1a1a" stroke-width="0.6"/></svg>
<svg style="left:92.00px;top:388.30px;" width="7.60" height="7" viewBox="0 0 7.60 7"><rect x="0.4" y="0.4" width="6.80" height="6.2" rx="0.8" fill="#141414" stroke="#9a9a9a" stroke-width="0.7"/><path d="M2.00 5.2 L5.40 1.8 M3.20 1.8 L5.40 1.8 L5.40 4" stroke="#eee" stroke-width="0.8" fill="none"/></svg>
<svg style="left:103.60px;top:377.00px;" width="32.40" height="18.00" viewBox="0 0 32.40 18.00"><defs><filter id="f1036" x="-20%" y="-20%" width="140%" height="140%"><feGaussianBlur stdDeviation="0.7"/></filter><filter id="f1036b" x="-20%" y="-20%" width="140%" height="140%"><feGaussianBlur stdDeviation="0.35"/></filter><clipPath id="f1036c"><rect width="32.40" height="18.00"/></clipPath></defs><g clip-path="url(#f1036c)"><rect width="32.40" height="18.00" fill="#101820"/><g filter="url(#f1036)"><path d="M4 16 Q3 8 7 5 Q10 2 14 4 Q18 1 22 3 Q26 4 25 10 Q26 15 22 16Z" fill="#2a9ad8"/><path d="M6 7 Q9 3 12 5 Q15 2 18 4 Q21 2 24 5 L22 8 Q17 6 12 8 Q8 7 6 9Z" fill="#e8f4fa"/><ellipse cx="15" cy="12" rx="7" ry="3" fill="#4ab8e8"/><circle cx="27" cy="5" r="2.2" fill="#8a8a8a"/></g></g><rect x="0.3" y="0.3" width="31.80" height="17.40" fill="none" stroke="#1a1a1a" stroke-width="0.6"/></svg>
<svg style="left:120.80px;top:388.00px;" width="15.20" height="7" viewBox="0 0 15.20 7"><rect x="0.4" y="0.4" width="14.40" height="6.2" rx="0.8" fill="#141414" stroke="#9a9a9a" stroke-width="0.7"/><path d="M2.20 4.8 Q1.60 2 3.80 2.2 Q5.80 2.6 5.20 4.8" stroke="#ddd" stroke-width="0.8" fill="none"/><path d="M9.60 5.2 L13.00 1.8 M10.80 1.8 L13.00 1.8 L13.00 4" stroke="#eee" stroke-width="0.8" fill="none"/><path d="M7.60 1 V6" stroke="#888" stroke-width="0.6"/></svg>
<svg style="left:140.60px;top:377.00px;" width="31.80" height="18.00" viewBox="0 0 31.80 18.00"><defs><filter id="f1406" x="-20%" y="-20%" width="140%" height="140%"><feGaussianBlur stdDeviation="0.7"/></filter><filter id="f1406b" x="-20%" y="-20%" width="140%" height="140%"><feGaussianBlur stdDeviation="0.35"/></filter><clipPath id="f1406c"><rect width="31.80" height="18.00"/></clipPath></defs><g clip-path="url(#f1406c)"><rect width="31.80" height="18.00" fill="#b08860"/><g filter="url(#f1406)"><rect width="32" height="10" fill="#c4d4e0"/><rect y="6" width="32" height="4" fill="#dfe6ea"/><path d="M0 10 L6 8.5 L12 9.5 L18 8 L26 9 L32 8.5 L32 11 L0 11Z" fill="#8a8488"/><rect y="11" width="32" height="7" fill="#b08860"/><circle cx="10.4" cy="12.4" r="0.8" fill="#5a3a20"/><circle cx="26.3" cy="12.1" r="0.7" fill="#d8b890"/><circle cx="6.9" cy="12.0" r="0.7" fill="#5a3a20"/><circle cx="2.9" cy="14.0" r="0.8" fill="#5a3a20"/><circle cx="30.3" cy="15.3" r="0.7" fill="#5a3a20"/><circle cx="18.5" cy="13.9" r="0.9" fill="#5a3a20"/><circle cx="17.8" cy="12.3" r="0.7" fill="#d8b890"/><circle cx="3.8" cy="13.4" r="0.8" fill="#5a3a20"/><circle cx="3.3" cy="14.9" r="0.6" fill="#5a3a20"/><circle cx="17.5" cy="11.9" r="0.5" fill="#5a3a20"/><circle cx="15.9" cy="14.7" r="0.8" fill="#7a5030"/><circle cx="18.7" cy="14.2" r="0.6" fill="#5a3a20"/><circle cx="22.4" cy="13.0" r="0.7" fill="#d8b890"/><circle cx="15.8" cy="13.6" r="0.7" fill="#d8b890"/><circle cx="31.4" cy="12.2" r="0.7" fill="#7a5030"/><circle cx="4.9" cy="14.4" r="0.5" fill="#d8b890"/><circle cx="2.5" cy="14.8" r="0.8" fill="#7a5030"/><circle cx="10.9" cy="13.6" r="0.7" fill="#7a5030"/><circle cx="2.2" cy="12.1" r="0.6" fill="#d8b890"/><circle cx="21.3" cy="11.9" r="0.8" fill="#d8b890"/><circle cx="18.5" cy="15.6" r="0.7" fill="#d8b890"/><circle cx="12.3" cy="15.5" r="0.5" fill="#7a5030"/><circle cx="11.4" cy="15.2" r="0.7" fill="#5a3a20"/><circle cx="24.6" cy="12.3" r="0.6" fill="#7a5030"/><circle cx="29.3" cy="14.5" r="0.6" fill="#7a5030"/><circle cx="17.6" cy="16.8" r="0.8" fill="#d8b890"/></g></g><rect x="0.3" y="0.3" width="31.20" height="17.40" fill="none" stroke="#1a1a1a" stroke-width="0.6"/></svg>
<svg style="left:177.00px;top:377.00px;" width="32.00" height="18.00" viewBox="0 0 32.00 18.00"><defs><filter id="f1770" x="-20%" y="-20%" width="140%" height="140%"><feGaussianBlur stdDeviation="0.7"/></filter><filter id="f1770b" x="-20%" y="-20%" width="140%" height="140%"><feGaussianBlur stdDeviation="0.35"/></filter><clipPath id="f1770c"><rect width="32.00" height="18.00"/></clipPath></defs><g clip-path="url(#f1770c)"><rect width="32.00" height="18.00" fill="#40464c"/><g filter="url(#f1770)"><path d="M0 0 L32 0 L20 7 L12 7Z" fill="#98a4b0"/><path d="M0 0 L12 7 L12 13 L0 18Z" fill="#2e343a"/><path d="M32 0 L20 7 L20 13 L32 18Z" fill="#3a4046"/><rect x="12" y="7" width="8" height="6" fill="#5a6068"/><ellipse cx="15.5" cy="10" rx="1.6" ry="3" fill="#c88048"/><path d="M0 18 L12 13 L20 13 L32 18Z" fill="#24282c"/><rect x="14.5" y="13" width="2" height="4" fill="#6a5a50"/></g></g><rect x="0.3" y="0.3" width="31.40" height="17.40" fill="none" stroke="#1a1a1a" stroke-width="0.6"/></svg>
<svg style="left:201.40px;top:388.00px;" width="7.60" height="7" viewBox="0 0 7.60 7"><rect x="0.4" y="0.4" width="6.80" height="6.2" rx="0.8" fill="#141414" stroke="#9a9a9a" stroke-width="0.7"/><path d="M2.00 5.2 L5.40 1.8 M3.20 1.8 L5.40 1.8 L5.40 4" stroke="#eee" stroke-width="0.8" fill="none"/></svg>
<svg style="left:213.00px;top:377.00px;" width="33.00" height="18.00" viewBox="0 0 33.00 18.00"><defs><filter id="f2130" x="-20%" y="-20%" width="140%" height="140%"><feGaussianBlur stdDeviation="0.7"/></filter><filter id="f2130b" x="-20%" y="-20%" width="140%" height="140%"><feGaussianBlur stdDeviation="0.35"/></filter><clipPath id="f2130c"><rect width="33.00" height="18.00"/></clipPath></defs><g clip-path="url(#f2130c)"><rect width="33.00" height="18.00" fill="#120a08"/><g filter="url(#f2130)"><ellipse cx="5" cy="7" rx="4" ry="5" fill="#a02a1a"/><ellipse cx="5" cy="5" rx="2" ry="2" fill="#e8d0c8"/><path d="M14 5 L24 4 L23 17 L16 17Z" fill="#c86818"/><ellipse cx="19" cy="6" rx="5" ry="3" fill="#f0b030"/><ellipse cx="18" cy="13" rx="3" ry="3" fill="#8a3810"/></g></g><rect x="0.3" y="0.3" width="32.40" height="17.40" fill="none" stroke="#1a1a1a" stroke-width="0.6"/></svg>
<div style="left:254.30px;top:373.90px;width:23.90px;height:23.60px;background:#fff;border:0.6px solid #222;box-sizing:border-box;border:0.6px solid #444;"></div>
<svg style="left:254.3px;top:373.5px;" width="24" height="24" viewBox="0 0 24 24"><path d="M0.6 15.2 L6.5 9.4 L6.5 11.9 Q17 11.2 23.6 2.3 L23.6 8.5 Q19 17.3 6.5 17.6 L6.5 21.1 Z" fill="#000"/></svg>
<svg style="left:286.40px;top:377.00px;" width="32.60" height="18.00" viewBox="0 0 32.60 18.00"><defs><filter id="f2864" x="-20%" y="-20%" width="140%" height="140%"><feGaussianBlur stdDeviation="0.7"/></filter><filter id="f2864b" x="-20%" y="-20%" width="140%" height="140%"><feGaussianBlur stdDeviation="0.35"/></filter><clipPath id="f2864c"><rect width="32.60" height="18.00"/></clipPath></defs><g clip-path="url(#f2864c)"><rect width="32.60" height="18.00" fill="#1c2450"/><g filter="url(#f2864)"><rect width="33" height="18" fill="#1c2450"/><ellipse cx="22" cy="4" rx="12" ry="5" fill="#3a5aa0"/><path d="M12 4 L24 2" stroke="#a0c8f0" stroke-width="1"/><path d="M0 7 Q8 8 16 11 Q20 13 22 16 L16 16 Q10 13 0 12Z" fill="#d87060"/><path d="M0 8.5 Q8 9.5 15 12" stroke="#f0b080" stroke-width="1.2" fill="none"/><path d="M14 14 L33 12 L33 18 L10 18Z" fill="#20203a"/><circle cx="27" cy="5" r="2.6" fill="#c0c0c8"/></g></g><rect x="0.3" y="0.3" width="32.00" height="17.40" fill="none" stroke="#1a1a1a" stroke-width="0.6"/></svg>
<svg style="left:303.80px;top:388.00px;" width="15.20" height="7" viewBox="0 0 15.20 7"><rect x="0.4" y="0.4" width="14.40" height="6.2" rx="0.8" fill="#141414" stroke="#9a9a9a" stroke-width="0.7"/><path d="M2.20 4.8 Q1.60 2 3.80 2.2 Q5.80 2.6 5.20 4.8" stroke="#ddd" stroke-width="0.8" fill="none"/><path d="M9.60 5.2 L13.00 1.8 M10.80 1.8 L13.00 1.8 L13.00 4" stroke="#eee" stroke-width="0.8" fill="none"/><path d="M7.60 1 V6" stroke="#888" stroke-width="0.6"/></svg>
<svg style="left:323.00px;top:377.00px;" width="32.60" height="18.00" viewBox="0 0 32.60 18.00"><defs><filter id="f3230" x="-20%" y="-20%" width="140%" height="140%"><feGaussianBlur stdDeviation="0.7"/></filter><filter id="f3230b" x="-20%" y="-20%" width="140%" height="140%"><feGaussianBlur stdDeviation="0.35"/></filter><clipPath id="f3230c"><rect width="32.60" height="18.00"/></clipPath></defs><g clip-path="url(#f3230c)"><rect width="32.60" height="18.00" fill="#1a5a7a"/><g filter="url(#f3230)"><rect width="33" height="18" fill="#1a5a7a"/><rect width="33" height="4" fill="#184868"/><ellipse cx="12" cy="2" rx="8" ry="2" fill="#3a90b0"/><rect y="10" width="33" height="4" fill="#6a5434"/><rect y="14" width="33" height="4" fill="#1a1812"/><circle cx="27" cy="5" r="2.6" fill="#b0b8c0"/></g></g><rect x="0.3" y="0.3" width="32.00" height="17.40" fill="none" stroke="#1a1a1a" stroke-width="0.6"/></svg>
<svg style="left:340.40px;top:388.00px;" width="15.20" height="7" viewBox="0 0 15.20 7"><rect x="0.4" y="0.4" width="14.40" height="6.2" rx="0.8" fill="#141414" stroke="#9a9a9a" stroke-width="0.7"/><path d="M2.20 4.8 Q1.60 2 3.80 2.2 Q5.80 2.6 5.20 4.8" stroke="#ddd" stroke-width="0.8" fill="none"/><path d="M9.60 5.2 L13.00 1.8 M10.80 1.8 L13.00 1.8 L13.00 4" stroke="#eee" stroke-width="0.8" fill="none"/><path d="M7.60 1 V6" stroke="#888" stroke-width="0.6"/></svg>
<svg style="left:358.00px;top:377.00px;" width="15.60" height="18.00" viewBox="0 0 15.60 18.00"><defs><filter id="f3580" x="-20%" y="-20%" width="140%" height="140%"><feGaussianBlur stdDeviation="0.7"/></filter><filter id="f3580b" x="-20%" y="-20%" width="140%" height="140%"><feGaussianBlur stdDeviation="0.35"/></filter><clipPath id="f3580c"><rect width="15.60" height="18.00"/></clipPath></defs><g clip-path="url(#f3580c)"><rect width="15.60" height="18.00" fill="#38a8b0"/><g filter="url(#f3580)"><rect width="16" height="4" fill="#d0507a"/><rect y="4" width="16" height="10" fill="#38a8b0"/><ellipse cx="6" cy="8" rx="3" ry="4" fill="#70d0d8"/><rect y="14" width="16" height="4" fill="#e8e8e8"/></g></g><rect x="0.3" y="0.3" width="15.00" height="17.40" fill="none" stroke="#1a1a1a" stroke-width="0.6"/></svg>
<svg style="left:378.00px;top:377.00px;" width="33.00" height="18.00" viewBox="0 0 33.00 18.00"><defs><filter id="f3780" x="-20%" y="-20%" width="140%" height="140%"><feGaussianBlur stdDeviation="0.7"/></filter><filter id="f3780b" x="-20%" y="-20%" width="140%" height="140%"><feGaussianBlur stdDeviation="0.35"/></filter><clipPath id="f3780c"><rect width="33.00" height="18.00"/></clipPath></defs><g clip-path="url(#f3780c)"><rect width="33.00" height="18.00" fill="#5a4a30"/><g filter="url(#f3780)"><rect width="33" height="18" fill="#5a4a30"/><rect x="10" y="0" width="23" height="7" fill="#e8d4a0"/><ellipse cx="28" cy="2" rx="6" ry="3" fill="#f4ecd0"/><ellipse cx="4" cy="6" rx="6" ry="8" fill="#34442a"/><path d="M8 7 L16 2 L27 6 L27 9 L8 9Z" fill="#4a4450"/><rect x="11" y="8" width="15" height="5" fill="#b89868"/><rect x="14" y="9" width="3" height="2.5" fill="#3a3020"/><ellipse cx="30" cy="9" rx="4" ry="5" fill="#3e4a2c"/><path d="M0 12 L16 12 L18 18 L0 18Z" fill="#c0641c"/><ellipse cx="7" cy="14" rx="6" ry="2.5" fill="#e08a2a"/><path d="M16 12 L33 12 L33 18 L18 18Z" fill="#3c4a2a"/></g></g><rect x="0.3" y="0.3" width="32.40" height="17.40" fill="none" stroke="#1a1a1a" stroke-width="0.6"/></svg>
<svg style="left:414.40px;top:377.00px;" width="32.60" height="18.00" viewBox="0 0 32.60 18.00"><defs><filter id="f4144" x="-20%" y="-20%" width="140%" height="140%"><feGaussianBlur stdDeviation="0.7"/></filter><filter id="f4144b" x="-20%" y="-20%" width="140%" height="140%"><feGaussianBlur stdDeviation="0.35"/></filter><clipPath id="f4144c"><rect width="32.60" height="18.00"/></clipPath></defs><g clip-path="url(#f4144c)"><rect width="32.60" height="18.00" fill="#5a4a30"/><g filter="url(#f4144)"><rect width="33" height="18" fill="#5a4a30"/><rect x="10" y="0" width="23" height="7" fill="#e8d4a0"/><ellipse cx="28" cy="2" rx="6" ry="3" fill="#f4ecd0"/><ellipse cx="4" cy="6" rx="6" ry="8" fill="#34442a"/><path d="M8 7 L16 2 L27 6 L27 9 L8 9Z" fill="#4a4450"/><rect x="11" y="8" width="15" height="5" fill="#b89868"/><rect x="14" y="9" width="3" height="2.5" fill="#3a3020"/><ellipse cx="30" cy="9" rx="4" ry="5" fill="#3e4a2c"/><path d="M0 12 L16 12 L18 18 L0 18Z" fill="#c0641c"/><ellipse cx="7" cy="14" rx="6" ry="2.5" fill="#e08a2a"/><path d="M16 12 L33 12 L33 18 L18 18Z" fill="#3c4a2a"/></g></g><rect x="0.3" y="0.3" width="32.00" height="17.40" fill="none" stroke="#1a1a1a" stroke-width="0.6"/></svg>
<svg style="left:451.60px;top:377.00px;" width="32.40" height="18.00" viewBox="0 0 32.40 18.00"><defs><filter id="f4516" x="-20%" y="-20%" width="140%" height="140%"><feGaussianBlur stdDeviation="0.7"/></filter><filter id="f4516b" x="-20%" y="-20%" width="140%" height="140%"><feGaussianBlur stdDeviation="0.35"/></filter><clipPath id="f4516c"><rect width="32.40" height="18.00"/></clipPath></defs><g clip-path="url(#f4516c)"><rect width="32.40" height="18.00" fill="#3a80c8"/><g filter="url(#f4516)"><rect width="33" height="9" fill="#4a98e8"/><rect y="0" width="33" height="3" fill="#2a78d8"/><ellipse cx="6" cy="5" rx="6" ry="2" fill="#b8d8f4"/><path d="M0 10 L8 7 L16 9 L33 8 L33 14 L0 14Z" fill="#46628a"/><rect x="13" y="6" width="14" height="7" fill="#f2f2f6"/><rect x="15" y="8" width="8" height="1.6" fill="#2a3448"/><rect x="0" y="13" width="33" height="5" fill="#1c222c"/><rect x="16" y="13" width="10" height="2" fill="#d8dce4"/></g></g><rect x="0.3" y="0.3" width="31.80" height="17.40" fill="none" stroke="#1a1a1a" stroke-width="0.6"/></svg>
<svg style="left:476.40px;top:388.00px;" width="7.60" height="7" viewBox="0 0 7.60 7"><rect x="0.4" y="0.4" width="6.80" height="6.2" rx="0.8" fill="#141414" stroke="#9a9a9a" stroke-width="0.7"/><path d="M2.00 5.2 L5.40 1.8 M3.20 1.8 L5.40 1.8 L5.40 4" stroke="#eee" stroke-width="0.8" fill="none"/></svg>
<svg style="left:488.00px;top:377.00px;" width="33.00" height="18.00" viewBox="0 0 33.00 18.00"><defs><filter id="f4880" x="-20%" y="-20%" width="140%" height="140%"><feGaussianBlur stdDeviation="0.7"/></filter><filter id="f4880b" x="-20%" y="-20%" width="140%" height="140%"><feGaussianBlur stdDeviation="0.35"/></filter><clipPath id="f4880c"><rect width="33.00" height="18.00"/></clipPath></defs><g clip-path="url(#f4880c)"><rect width="33.00" height="18.00" fill="#6a7a60"/><g filter="url(#f4880)"><rect width="33" height="18" fill="#3a4430"/><rect width="33" height="8" fill="#90b0c8"/><ellipse cx="7" cy="3" rx="6" ry="3" fill="#e8ecec"/><ellipse cx="3" cy="10" rx="5" ry="8" fill="#4a6030"/><rect x="11" y="4" width="15" height="10" fill="#c8c09c"/><rect x="13" y="7" width="3" height="3" fill="#5a5040"/><ellipse cx="29" cy="10" rx="6" ry="6" fill="#3e5228"/><rect y="14" width="33" height="4" fill="#4a4428"/></g></g><rect x="0.3" y="0.3" width="32.40" height="17.40" fill="none" stroke="#1a1a1a" stroke-width="0.6"/></svg>
<svg style="left:513.40px;top:388.00px;" width="7.60" height="7" viewBox="0 0 7.60 7"><rect x="0.4" y="0.4" width="6.80" height="6.2" rx="0.8" fill="#141414" stroke="#9a9a9a" stroke-width="0.7"/><path d="M2.00 5.2 L5.40 1.8 M3.20 1.8 L5.40 1.8 L5.40 4" stroke="#eee" stroke-width="0.8" fill="none"/></svg>
<svg style="left:524.40px;top:377.00px;" width="32.00" height="18.00" viewBox="0 0 32.00 18.00"><defs><filter id="f5244" x="-20%" y="-20%" width="140%" height="140%"><feGaussianBlur stdDeviation="0.7"/></filter><filter id="f5244b" x="-20%" y="-20%" width="140%" height="140%"><feGaussianBlur stdDeviation="0.35"/></filter><clipPath id="f5244c"><rect width="32.00" height="18.00"/></clipPath></defs><g clip-path="url(#f5244c)"><rect width="32.00" height="18.00" fill="#e0e8ee"/><g filter="url(#f5244)"><rect width="32" height="18" fill="#e4ecf2"/><rect width="32" height="3" fill="#5a5e62"/><path d="M0 0 L9 3 L9 14 L0 18Z" fill="#c87838"/><path d="M0 10 L9 8 L9 14 L0 18Z" fill="#6a6a70"/><rect x="16" y="11.5" width="13" height="1.3" fill="#223048"/><rect x="9" y="14" width="23" height="4" fill="#c8d4dc"/></g></g><rect x="0.3" y="0.3" width="31.40" height="17.40" fill="none" stroke="#1a1a1a" stroke-width="0.6"/></svg>
<svg style="left:561.60px;top:377.00px;" width="32.00" height="18.00" viewBox="0 0 32.00 18.00"><defs><filter id="f5616" x="-20%" y="-20%" width="140%" height="140%"><feGaussianBlur stdDeviation="0.7"/></filter><filter id="f5616b" x="-20%" y="-20%" width="140%" height="140%"><feGaussianBlur stdDeviation="0.35"/></filter><clipPath id="f5616c"><rect width="32.00" height="18.00"/></clipPath></defs><g clip-path="url(#f5616c)"><rect width="32.00" height="18.00" fill="#2a5a58"/><g filter="url(#f5616)"><rect width="32" height="18" fill="#2a5a58"/><path d="M3 0 V18 M7 0 V18 M11 0 V18 M15 0 V18" stroke="#3e7674" stroke-width="1.4"/><rect x="19" y="0" width="13" height="18" fill="#1e4a48"/></g><circle cx="25.5" cy="5.5" r="3" fill="none" stroke="#c8c8c8" stroke-width="0.6"/></g><rect x="0.3" y="0.3" width="31.40" height="17.40" fill="none" stroke="#1a1a1a" stroke-width="0.6"/></svg>
<svg style="left:578.40px;top:388.00px;" width="15.20" height="7" viewBox="0 0 15.20 7"><rect x="0.4" y="0.4" width="14.40" height="6.2" rx="0.8" fill="#141414" stroke="#9a9a9a" stroke-width="0.7"/><path d="M2.20 4.8 Q1.60 2 3.80 2.2 Q5.80 2.6 5.20 4.8" stroke="#ddd" stroke-width="0.8" fill="none"/><path d="M9.60 5.2 L13.00 1.8 M10.80 1.8 L13.00 1.8 L13.00 4" stroke="#eee" stroke-width="0.8" fill="none"/><path d="M7.60 1 V6" stroke="#888" stroke-width="0.6"/></svg>
<svg style="left:598.00px;top:377.00px;" width="32.00" height="18.00" viewBox="0 0 32.00 18.00"><defs><filter id="f5980" x="-20%" y="-20%" width="140%" height="140%"><feGaussianBlur stdDeviation="0.7"/></filter><filter id="f5980b" x="-20%" y="-20%" width="140%" height="140%"><feGaussianBlur stdDeviation="0.35"/></filter><clipPath id="f5980c"><rect width="32.00" height="18.00"/></clipPath></defs><g clip-path="url(#f5980c)"><rect width="32.00" height="18.00" fill="#201a10"/><g filter="url(#f5980)"><rect width="32" height="18" fill="#201a10"/><rect x="2" y="1" width="26" height="12" fill="#4a5030"/><ellipse cx="13" cy="7" rx="6" ry="5" fill="#7a8a40"/><ellipse cx="10" cy="5" rx="2.5" ry="3" fill="#b0b870"/><ellipse cx="22" cy="6" rx="3" ry="4" fill="#a09a60"/><rect x="4" y="2" width="1" height="11" fill="#d0d0b0"/><rect y="13" width="32" height="5" fill="#3a3020"/><ellipse cx="20" cy="15" rx="4" ry="1.5" fill="#8a8060"/></g></g><rect x="0.3" y="0.3" width="31.40" height="17.40" fill="none" stroke="#1a1a1a" stroke-width="0.6"/></svg>
<svg style="left:622.40px;top:388.00px;" width="7.60" height="7" viewBox="0 0 7.60 7"><rect x="0.4" y="0.4" width="6.80" height="6.2" rx="0.8" fill="#141414" stroke="#9a9a9a" stroke-width="0.7"/><path d="M2.00 5.2 L5.40 1.8 M3.20 1.8 L5.40 1.8 L5.40 4" stroke="#eee" stroke-width="0.8" fill="none"/></svg>
<svg style="left:634.20px;top:377.30px;" width="32.60" height="18.00" viewBox="0 0 32.60 18.00"><defs><filter id="f6342" x="-20%" y="-20%" width="140%" height="140%"><feGaussianBlur stdDeviation="0.7"/></filter><filter id="f6342b" x="-20%" y="-20%" width="140%" height="140%"><feGaussianBlur stdDeviation="0.35"/></filter><clipPath id="f6342c"><rect width="32.60" height="18.00"/></clipPath></defs><g clip-path="url(#f6342c)"><rect width="32.60" height="18.00" fill="#3aaad8"/><g filter="url(#f6342)"></g><g filter="url(#f6342b)"><ellipse cx="2.0" cy="1.5" rx="2.6" ry="2.3" fill="#f0c828"/><ellipse cx="8.6" cy="1.5" rx="2.6" ry="2.3" fill="#f0c828"/><ellipse cx="15.2" cy="1.5" rx="2.6" ry="2.3" fill="#f0c828"/><ellipse cx="21.8" cy="1.5" rx="2.6" ry="2.3" fill="#f0c828"/><ellipse cx="28.4" cy="1.5" rx="2.6" ry="2.3" fill="#f0c828"/><ellipse cx="35.0" cy="1.5" rx="2.6" ry="2.3" fill="#f0c828"/><ellipse cx="5.3" cy="8" rx="2.6" ry="2.3" fill="#f0c828"/><ellipse cx="11.9" cy="8" rx="2.6" ry="2.3" fill="#f0c828"/><ellipse cx="18.5" cy="8" rx="2.6" ry="2.3" fill="#f0c828"/><ellipse cx="25.1" cy="8" rx="2.6" ry="2.3" fill="#f0c828"/><ellipse cx="31.7" cy="8" rx="2.6" ry="2.3" fill="#f0c828"/><ellipse cx="38.3" cy="8" rx="2.6" ry="2.3" fill="#f0c828"/><ellipse cx="2.0" cy="14.5" rx="2.6" ry="2.3" fill="#f0c828"/><ellipse cx="8.6" cy="14.5" rx="2.6" ry="2.3" fill="#f0c828"/><ellipse cx="15.2" cy="14.5" rx="2.6" ry="2.3" fill="#f0c828"/><ellipse cx="21.8" cy="14.5" rx="2.6" ry="2.3" fill="#f0c828"/><ellipse cx="28.4" cy="14.5" rx="2.6" ry="2.3" fill="#f0c828"/><ellipse cx="35.0" cy="14.5" rx="2.6" ry="2.3" fill="#f0c828"/><circle cx="15" cy="10" r="2" fill="#c8401c"/></g><circle cx="27.5" cy="5" r="2.3" fill="#8a8a8a" stroke="#333" stroke-width="0.6"/></g><rect x="0.3" y="0.3" width="32.00" height="17.40" fill="none" stroke="#1a1a1a" stroke-width="0.6"/></svg>
<svg style="left:651.60px;top:388.30px;" width="15.20" height="7" viewBox="0 0 15.20 7"><rect x="0.4" y="0.4" width="14.40" height="6.2" rx="0.8" fill="#141414" stroke="#9a9a9a" stroke-width="0.7"/><path d="M2.20 4.8 Q1.60 2 3.80 2.2 Q5.80 2.6 5.20 4.8" stroke="#ddd" stroke-width="0.8" fill="none"/><path d="M9.60 5.2 L13.00 1.8 M10.80 1.8 L13.00 1.8 L13.00 4" stroke="#eee" stroke-width="0.8" fill="none"/><path d="M7.60 1 V6" stroke="#888" stroke-width="0.6"/></svg>
<svg style="left:670.60px;top:377.30px;" width="32.20" height="18.00" viewBox="0 0 32.20 18.00"><defs><filter id="f6706" x="-20%" y="-20%" width="140%" height="140%"><feGaussianBlur stdDeviation="0.7"/></filter><filter id="f6706b" x="-20%" y="-20%" width="140%" height="140%"><feGaussianBlur stdDeviation="0.35"/></filter><clipPath id="f6706c"><rect width="32.20" height="18.00"/></clipPath></defs><g clip-path="url(#f6706c)"><rect width="32.20" height="18.00" fill="#2e3a22"/><g filter="url(#f6706)"><rect width="33" height="18" fill="#2e3a22"/><ellipse cx="8" cy="6" rx="6" ry="5" fill="#4a5a30"/><ellipse cx="21" cy="7" rx="8" ry="6" fill="#8a8a50"/><ellipse cx="25" cy="4" rx="3" ry="3" fill="#b0a870"/><rect y="13" width="33" height="2.5" fill="#8a5a58"/><rect y="15.5" width="33" height="2.5" fill="#2a2a20"/></g></g><rect x="0.3" y="0.3" width="31.60" height="17.40" fill="none" stroke="#1a1a1a" stroke-width="0.6"/></svg>
<svg style="left:695.20px;top:388.30px;" width="7.60" height="7" viewBox="0 0 7.60 7"><rect x="0.4" y="0.4" width="6.80" height="6.2" rx="0.8" fill="#141414" stroke="#9a9a9a" stroke-width="0.7"/><path d="M2.00 5.2 L5.40 1.8 M3.20 1.8 L5.40 1.8 L5.40 4" stroke="#eee" stroke-width="0.8" fill="none"/></svg>
<svg style="left:707.00px;top:377.30px;" width="32.60" height="18.00" viewBox="0 0 32.60 18.00"><defs><filter id="f7070" x="-20%" y="-20%" width="140%" height="140%"><feGaussianBlur stdDeviation="0.7"/></filter><filter id="f7070b" x="-20%" y="-20%" width="140%" height="140%"><feGaussianBlur stdDeviation="0.35"/></filter><clipPath id="f7070c"><rect width="32.60" height="18.00"/></clipPath></defs><g clip-path="url(#f7070c)"><rect width="32.60" height="18.00" fill="#050605"/><g filter="url(#f7070)"><ellipse cx="23" cy="11" rx="8" ry="6" fill="#3a4a30"/><ellipse cx="27" cy="7" rx="3" ry="4" fill="#8aa060"/><ellipse cx="21" cy="13" rx="3" ry="2" fill="#a0a890"/><ellipse cx="18" cy="6" rx="2.2" ry="1.6" fill="#a83040"/><ellipse cx="12" cy="14" rx="4" ry="2" fill="#6a7060"/><ellipse cx="29" cy="14" rx="2" ry="3" fill="#9ab070"/></g></g><rect x="0.3" y="0.3" width="32.00" height="17.40" fill="none" stroke="#1a1a1a" stroke-width="0.6"/></svg>
<div style="left:7.80px;top:404.50px;width:734.70px;height:6.30px;background:#111;"></div>
<div style="left:358.00px;top:406.30px;width:383.30px;height:3.90px;background:#999999;"></div>
<svg style="left:1.8px;top:387px;" width="3.6" height="4.6" viewBox="0 0 3.6 4.6"><path d="M3.6 0 L0 2.3 L3.6 4.6Z" fill="#8a8a8a"/></svg>
</body></html>
